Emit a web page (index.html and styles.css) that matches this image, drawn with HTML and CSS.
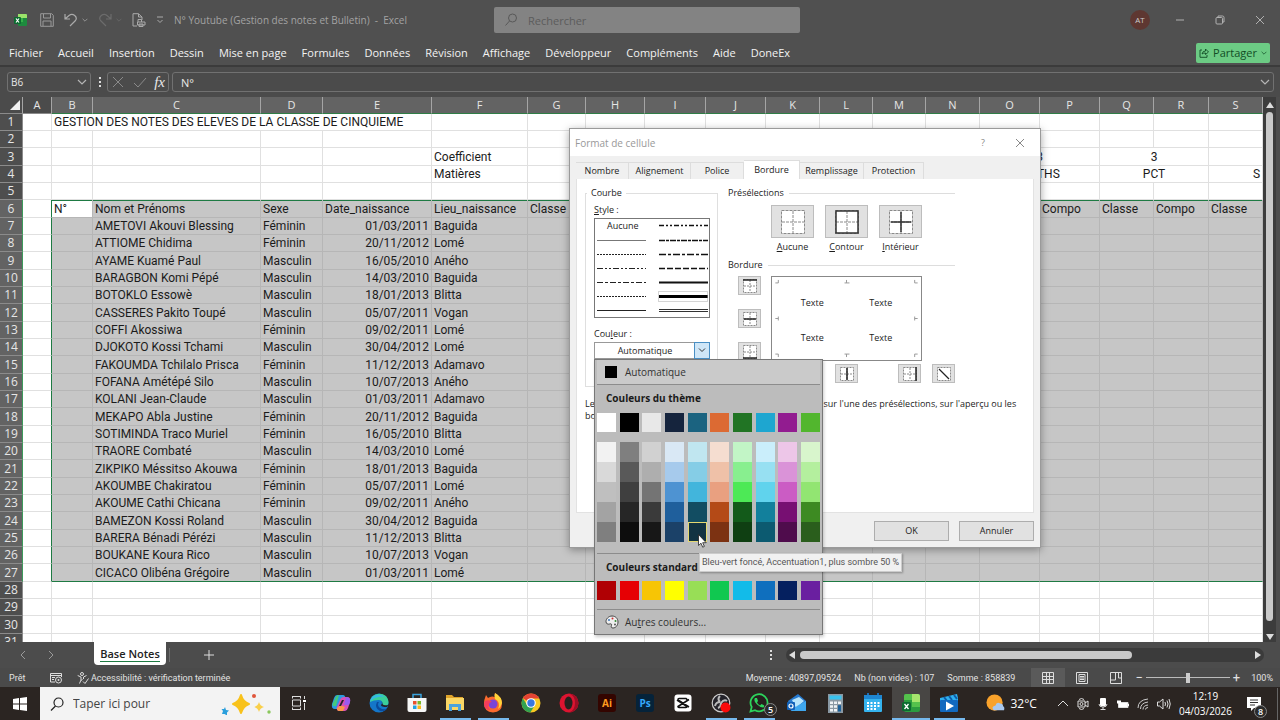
FILE: index.html
```html
<!DOCTYPE html>
<html lang="fr">
<head>
<meta charset="utf-8">
<title>N° Youtube (Gestion des notes et Bulletin) - Excel</title>
<link rel="stylesheet" href="styles.css">
</head>
<body>
<svg class="defs" aria-hidden="true">
  <defs>
    <symbol id="grid4" viewBox="0 0 14 14"><rect x=".5" y=".5" width="13" height="13" fill="#fff"/><path d="M.5 .5H13.5V13.5H.5ZM7 1V13M1 7H13" fill="none" stroke="#8a8a8a" stroke-dasharray="2 1"/></symbol>
    <symbol id="grid24" viewBox="0 0 24 24"><rect x=".5" y=".5" width="23" height="23" fill="#fff"/><path d="M.5 .5H23.5V23.5H.5ZM12 1V23M1 12H23" fill="none" stroke="#8a8a8a" stroke-dasharray="3 1"/></symbol>
    <symbol id="chev" viewBox="0 0 10 10"><path d="M1 3l4 4 4-4" fill="none" stroke="currentColor" stroke-width="1.2"/></symbol>
  </defs>
</svg>

<header class="titlebar">
  <div class="quick">
    <svg class="i14" viewBox="0 0 14 14"><rect x="4" y="1" width="9" height="12" rx="1" fill="#1d8a3e"/><path d="M4 1h8q1 0 1 1v3H4z" fill="#9be36a"/><path d="M4 5h5v4H4z" fill="#36b24a"/><rect x="0" y="4" width="7" height="7" rx="1" fill="#0c6b30"/><path d="M2 5.500l3 4m0-4l-3 4" stroke="#fff" stroke-width="1.200"/></svg>
    <button class="tool save" aria-label="Enregistrer"><svg class="i14" viewBox="0 0 14 14"><path d="M.7.7h11l1.600 1.600v11H.7zM3.500 1v4h7V1M3 13V8h8v5" fill="none" stroke="currentColor"/></svg></button>
    <button class="tool" aria-label="Annuler la frappe"><svg class="i14" viewBox="0 0 14 14"><path d="M1 1v5h5M1 6l4-3.500C9-.5 14 4 11.500 7.500L6 13" fill="none" stroke="currentColor" stroke-width="1.200"/></svg><svg class="i6"><use href="#chev"/></svg></button>
    <button class="tool dim" aria-label="Rétablir"><svg class="i14" viewBox="0 0 14 14"><path d="M13 1v5H8M13 6L9 2.500C5-.5 0 4 2.500 7.500L8 13" fill="none" stroke="currentColor" stroke-width="1.200"/></svg><svg class="i6"><use href="#chev"/></svg></button>
    <button class="tool" aria-label="Aperçu"><svg class="i14" viewBox="0 0 14 14"><path d="M5 13H1V.7h5.500L10 4v3M6.500 1v3H10M6 9V6.500h3.500V9M5.500 9H13v3H5.500zM7 11h4v2.500H7z" fill="none" stroke="currentColor"/></svg></button>
    <button class="tool" aria-label="Personnaliser"><svg class="i8" viewBox="0 0 8 8"><path d="M1 1h6M1.500 4L4 6.500 6.500 4" fill="none" stroke="currentColor"/></svg></button>
    <h1>N° Youtube (Gestion des notes et Bulletin) &nbsp;-&nbsp; Excel</h1>
  </div>
  <label class="find"><svg class="i14" viewBox="0 0 14 14"><circle cx="8.500" cy="5" r="4" fill="none" stroke="currentColor"/><path d="M5.500 8L1.500 12.500" stroke="currentColor"/></svg><input type="text" placeholder="Rechercher" aria-label="Rechercher"></label>
  <div class="window">
    <span class="avatar">AT</span>
    <button class="tool" aria-label="Réduire"><svg class="i10" viewBox="0 0 10 10"><path d="M1 5h8" stroke="currentColor"/></svg></button>
    <button class="tool" aria-label="Restaurer"><svg class="i10" viewBox="0 0 10 10"><path d="M3 2.500V1h4.500q1.500 0 1.500 1.500V7H7.500" fill="none" stroke="currentColor"/><rect x="1" y="2.500" width="6.500" height="6.500" rx="1" fill="none" stroke="currentColor"/></svg></button>
    <button class="tool" aria-label="Fermer"><svg class="i10" viewBox="0 0 10 10"><path d="M1 1l8 8M9 1L1 9" stroke="currentColor"/></svg></button>
  </div>
</header>

<nav class="menu">
  <button>Fichier</button><button>Accueil</button><button>Insertion</button><button>Dessin</button><button>Mise en page</button><button>Formules</button><button>Données</button><button>Révision</button><button>Affichage</button><button>Développeur</button><button>Compléments</button><button>Aide</button><button>DoneEx</button>
  <button class="share"><svg class="i10" viewBox="0 0 10 10"><path d="M3 2H1v7.300h7V7M3 6Q3.500 3 6.500 3V1L9.500 4 6.500 6.500V5Q4 5 3 6z" fill="none" stroke="currentColor" stroke-width=".9"/></svg>Partager<svg class="i6"><use href="#chev"/></svg></button>
</nav>

<section class="formula">
  <div class="box name"><input type="text" value="B6" aria-label="Zone Nom"><svg class="i10"><use href="#chev"/></svg></div>
  <svg class="dots" viewBox="0 0 4 12"><path d="M1 1h2v2H1zM1 5h2v2H1zM1 9h2v2H1z" fill="#ddd"/></svg>
  <div class="box fx">
    <svg class="i14" viewBox="0 0 14 14"><path d="M2 2l10 10M12 2L2 12" stroke="#8a8a8a"/></svg>
    <svg class="i14" viewBox="0 0 14 14"><path d="M1 8l4 4 8-9" fill="none" stroke="#8a8a8a"/></svg>
    <i>fx</i>
  </div>
  <div class="box bar"><input type="text" value="N°" aria-label="Barre de formule"><svg class="i10"><use href="#chev"/></svg></div>
</section>

<main class="sheet">
<div class="cells">
<table>
<colgroup><col class="w23"><col class="w29"><col class="w41"><col class="w168"><col class="w62"><col class="w109"><col class="w96"><col class="w58"><col class="w59"><col class="w61"><col class="w60"><col class="w54"><col class="w53"><col class="w53"><col class="w54"><col class="w60"><col class="w60"><col class="w54"><col class="w55"><col></colgroup>
<thead><tr><th class="corner"><svg class="i10" viewBox="0 0 10 10"><path d="M10 0v10H0z" fill="#f2f2f2"/></svg><th class="off">A<th>B<th>C<th>D<th>E<th>F<th>G<th>H<th>I<th>J<th>K<th>L<th>M<th>N<th>O<th>P<th>Q<th>R<th>S</tr></thead>
<tbody>
<tr><th>1<td><td colspan="4">GESTION DES NOTES DES ELEVES DE LA CLASSE DE CINQUIEME<td> <td><td><td><td><td><td><td><td><td><td><td><td><td></tr>
<tr><th>2<td><td><td><td><td><td> <td><td><td><td><td><td><td><td><td><td><td><td><td></tr>
<tr><th>3<td><td><td><td><td><td>Coefficient<td><td><td><td><td><td><td><td><td class="mid" colspan="2">3<td class="mid" colspan="2">3<td></tr>
<tr><th>4<td><td><td><td><td><td>Matières<td><td><td><td><td><td><td><td><td class="mid" colspan="2">MATHS<td class="mid" colspan="2">PCT<td class="num">S</tr>
<tr><th>5<td><td><td><td><td><td> <td><td><td><td><td><td><td><td><td><td><td><td><td></tr>
<tr class="sel first"><th>6<td><td class="cur">N°<td>Nom et Prénoms<td>Sexe<td>Date_naissance<td>Lieu_naissance<td>Classe<td><td><td><td><td><td><td><td>Classe<td>Compo<td>Classe<td>Compo<td>Classe</tr>
<tr class="sel"><th>7<td><td><td>AMETOVI Akouvi Blessing<td>Féminin<td class="num">01/03/2011<td>Baguida<td><td><td><td><td><td><td><td><td><td><td><td><td></tr>
<tr class="sel"><th>8<td><td><td>ATTIOME Chidima<td>Féminin<td class="num">20/11/2012<td>Lomé<td><td><td><td><td><td><td><td><td><td><td><td><td></tr>
<tr class="sel"><th>9<td><td><td>AYAME Kuamé Paul<td>Masculin<td class="num">16/05/2010<td>Aného<td><td><td><td><td><td><td><td><td><td><td><td><td></tr>
<tr class="sel"><th>10<td><td><td>BARAGBON Komi Pépé<td>Masculin<td class="num">14/03/2010<td>Baguida<td><td><td><td><td><td><td><td><td><td><td><td><td></tr>
<tr class="sel"><th>11<td><td><td>BOTOKLO Essowè<td>Masculin<td class="num">18/01/2013<td>Blitta<td><td><td><td><td><td><td><td><td><td><td><td><td></tr>
<tr class="sel"><th>12<td><td><td>CASSERES Pakito Toupé<td>Masculin<td class="num">05/07/2011<td>Vogan<td><td><td><td><td><td><td><td><td><td><td><td><td></tr>
<tr class="sel"><th>13<td><td><td>COFFI Akossiwa<td>Féminin<td class="num">09/02/2011<td>Lomé<td><td><td><td><td><td><td><td><td><td><td><td><td></tr>
<tr class="sel"><th>14<td><td><td>DJOKOTO Kossi Tchami<td>Masculin<td class="num">30/04/2012<td>Lomé<td><td><td><td><td><td><td><td><td><td><td><td><td></tr>
<tr class="sel"><th>15<td><td><td>FAKOUMDA Tchilalo Prisca<td>Féminin<td class="num">11/12/2013<td>Adamavo<td><td><td><td><td><td><td><td><td><td><td><td><td></tr>
<tr class="sel"><th>16<td><td><td>FOFANA Amétépé Silo<td>Masculin<td class="num">10/07/2013<td>Aného<td><td><td><td><td><td><td><td><td><td><td><td><td></tr>
<tr class="sel"><th>17<td><td><td>KOLANI Jean-Claude<td>Masculin<td class="num">01/03/2011<td>Adamavo<td><td><td><td><td><td><td><td><td><td><td><td><td></tr>
<tr class="sel"><th>18<td><td><td>MEKAPO Abla Justine<td>Féminin<td class="num">20/11/2012<td>Baguida<td><td><td><td><td><td><td><td><td><td><td><td><td></tr>
<tr class="sel"><th>19<td><td><td>SOTIMINDA Traco Muriel<td>Féminin<td class="num">16/05/2010<td>Blitta<td><td><td><td><td><td><td><td><td><td><td><td><td></tr>
<tr class="sel"><th>20<td><td><td>TRAORE Combaté<td>Masculin<td class="num">14/03/2010<td>Lomé<td><td><td><td><td><td><td><td><td><td><td><td><td></tr>
<tr class="sel"><th>21<td><td><td>ZIKPIKO Méssitso Akouwa<td>Féminin<td class="num">18/01/2013<td>Baguida<td><td><td><td><td><td><td><td><td><td><td><td><td></tr>
<tr class="sel"><th>22<td><td><td>AKOUMBE Chakiratou<td>Féminin<td class="num">05/07/2011<td>Lomé<td><td><td><td><td><td><td><td><td><td><td><td><td></tr>
<tr class="sel"><th>23<td><td><td>AKOUME Cathi Chicana<td>Féminin<td class="num">09/02/2011<td>Aného<td><td><td><td><td><td><td><td><td><td><td><td><td></tr>
<tr class="sel"><th>24<td><td><td>BAMEZON Kossi Roland<td>Masculin<td class="num">30/04/2012<td>Baguida<td><td><td><td><td><td><td><td><td><td><td><td><td></tr>
<tr class="sel"><th>25<td><td><td>BARERA Bénadi Pérézi<td>Masculin<td class="num">11/12/2013<td>Blitta<td><td><td><td><td><td><td><td><td><td><td><td><td></tr>
<tr class="sel"><th>26<td><td><td>BOUKANE Koura Rico<td>Masculin<td class="num">10/07/2013<td>Vogan<td><td><td><td><td><td><td><td><td><td><td><td><td></tr>
<tr class="sel last"><th>27<td><td><td>CICACO Olibéna Grégoire<td>Masculin<td class="num">01/03/2011<td>Lomé<td><td><td><td><td><td><td><td><td><td><td><td><td></tr>
<tr><th>28<td><td><td><td><td><td> <td><td><td><td><td><td><td><td><td><td><td><td><td></tr>
<tr><th>29<td><td><td><td><td><td> <td><td><td><td><td><td><td><td><td><td><td><td><td></tr>
<tr><th>30<td><td><td><td><td><td> <td><td><td><td><td><td><td><td><td><td><td><td><td></tr>
<tr><th>31<td><td><td><td><td><td> <td><td><td><td><td><td><td><td><td><td><td><td><td></tr>
</tbody>
</table>
</div>
<div class="vscroll"><svg class="i8" viewBox="0 0 8 8"><path d="M4 1l4 6H0z" fill="#ddd"/></svg><span></span><svg class="i8" viewBox="0 0 8 8"><path d="M4 7l4-6H0z" fill="#ddd"/></svg></div>
</main>

<section class="tabs">
  <button class="arrow" aria-label="Feuille précédente"><svg class="i10" viewBox="0 0 10 10"><path d="M7 1L3 5l4 4" fill="none" stroke="currentColor"/></svg></button>
  <button class="arrow" aria-label="Feuille suivante"><svg class="i10" viewBox="0 0 10 10"><path d="M3 1l4 4-4 4" fill="none" stroke="currentColor"/></svg></button>
  <button class="sheetname"><span>Base Notes</span></button>
  <span class="split"></span>
  <button class="plus" aria-label="Nouvelle feuille"><svg class="i10" viewBox="0 0 10 10"><path d="M5 0v10M0 5h10" stroke="#ddd"/></svg></button>
  <svg class="dots" viewBox="0 0 4 12"><path d="M1 1h2v2H1zM1 5h2v2H1zM1 9h2v2H1z" fill="#ddd"/></svg>
  <div class="hscroll"><svg class="i8" viewBox="0 0 8 8"><path d="M1 4l6-4v8z" fill="#ddd"/></svg><span></span><svg class="i8" viewBox="0 0 8 8"><path d="M7 4L1 0v8z" fill="#ddd"/></svg></div>
</section>

<footer class="status">
  <span class="ready">Prêt</span>
  <svg class="i12" viewBox="0 0 12 12"><path d="M5 10H.5V1.500h11V5M.5 3.500h11M2 5.500h3M2 7.500h2" fill="none" stroke="#ddd"/><circle cx="8.500" cy="8" r="3" fill="none" stroke="#ddd"/><circle cx="8.500" cy="8" r="1" fill="#ddd"/></svg>
  <span class="access"><svg class="i12" viewBox="0 0 12 12"><circle cx="5" cy="2" r="1.500" fill="none" stroke="#ddd"/><path d="M.7 3.500L4 5v3l-1.500 3.500M9.500 3.500L6.500 5v2M4 8.500l1.500-1M6 9.500L8 11.500l3.500-5" fill="none" stroke="#ddd"/></svg>Accessibilité : vérification terminée</span>
  <div class="stats"><span>Moyenne : 40897,09524</span><span>Nb (non vides) : 107</span><span>Somme : 858839</span></div>
  <div class="views">
    <button class="on" aria-label="Normal"><svg class="i12" viewBox="0 0 12 12"><path d="M.5.5h11v11H.5zM4.500 1v10M7.500 1v10M1 4.500h10M1 7.500h10" fill="none" stroke="#ddd"/></svg></button>
    <button aria-label="Mise en page"><svg class="i12" viewBox="0 0 12 12"><path d="M.5.5h11v11H.5zM3 2.500h6v7H3zM4 4.500h4M4 6h4M4 7.500h4" fill="none" stroke="#ddd"/></svg></button>
    <button aria-label="Sauts de page"><svg class="i12" viewBox="0 0 12 12"><path d="M.5.5h11v11H.5zM.5 8h5V.5M8.500.5V6h3" fill="none" stroke="#ddd"/></svg></button>
  </div>
  <div class="zoom"><span>−</span><input type="range" min="0" max="200" value="100" aria-label="Zoom"><span>+</span></div>
  <span class="pct">100%</span>
</footer>

<nav class="taskbar">
  <button class="start" aria-label="Démarrer"><svg class="i14" viewBox="0 0 14 14"><path d="M0 2l6-1v5.600H0zM7 .9L14 0v6.600H7zM0 7.400h6V13l-6-1zM7 7.400h7V14l-7-1z" fill="#fff"/></svg></button>
  <label class="wsearch"><svg class="i14" viewBox="0 0 14 14"><circle cx="8.500" cy="5.500" r="4.500" fill="none" stroke="#222" stroke-width="1.200"/><path d="M5.500 9L1 13.500" stroke="#222" stroke-width="1.200"/></svg><input type="text" placeholder="Taper ici pour" aria-label="Taper ici pour rechercher">
    <svg class="stars" viewBox="0 0 50 22"><path d="M20 2q2 7 8 9-6 2-8 9-2-7-8-9 6-2 8-9z" fill="#f8c21c" stroke="#f8c21c" stroke-width="2" stroke-linejoin="round"/><path d="M38 9q1 4 5 5-4 1-5 5-1-4-5-5 4-1 5-5z" fill="#f9cf4a"/><path d="M4 14l1 3 3 .5-2 2 0 3-2.500-1.500L1 21l1-3-1.500-2 2.500 0z" fill="#2b9fdc"/><circle cx="33" cy="3" r="2" fill="#e0563b"/><circle cx="48" cy="19" r="1.700" fill="#8ac75c"/></svg></label>
  <div class="apps">
    <button class="tv" aria-label="Vue des tâches"><svg class="i14" viewBox="0 0 14 14"><path d="M0 .5h9M.5 4h8v6h-8zM0 13.500h9M.5 0v2.500M8.500 0v2.500M.5 11.500V14M8.500 11.500V14M12.500 0v3M12.500 7v7" fill="none" stroke="#ddd"/><rect x="11" y="4" width="3" height="2" fill="#fff"/></svg></button>
    <button aria-label="Copilot"><svg viewBox="0 0 20 20"><path d="M6 2h6q2 0 2.500 3L11 13q-1 3-4 3H4Q0 16 1 11L3 5q1-3 3-3z" fill="#2a9be0"/><path d="M4 6q1-4 4-4L5 13H2q-1-2 0-3z" fill="#45c97b"/><path d="M14 18H8q-2 0-2.500-3L9 7q1-3 4-3h3q4 0 3 5l-2 6q-1 3-3 3z" fill="#d850b5"/><path d="M16 4q4 1 3 5l-1 3h-5l2-8z" fill="#9a5af0"/><path d="M6 15q2-1 3-3l5 2-2 4H8q-2 0-2-3z" fill="#fb9548"/><path d="M11 7l-3 6h2l3-6z" fill="#25232a"/></svg></button>
    <button aria-label="Edge"><svg viewBox="0 0 20 20"><circle cx="10" cy="10" r="9.500" fill="#1476c9"/><path d="M1 9C2-2 19-2 19.500 9q0 5-6 4 1-6-4-6-5 0-8.500 2z" fill="#3bcf9a"/><path d="M1 9C2 1 12 0 15 4 8 3 3 6 1 9z" fill="#35b8e6"/><path d="M8 9q-3 6 3 9 4 1 7-2-8 1-9-4 0-2 1-3z" fill="#0b4b9c"/><path d="M12 8q2 2 0 4 0 2 6 2l1.500-2q-5 1-6-1 0-2-1.500-3z" fill="#25232a"/></svg></button>
    <button aria-label="Microsoft Store"><svg viewBox="0 0 20 20"><path d="M6 5V1.500h8V5" fill="none" stroke="#3aa4de" stroke-width="1.500"/><path d="M.5 5h19v12q0 2-2 2h-15q-2 0-2-2z" fill="#f6f6f6"/><path d="M6 8h3.500v3.500H6z" fill="#e9512d"/><path d="M10.500 8H14v3.500h-3.500z" fill="#79b829"/><path d="M6 12.500h3.500V16H6z" fill="#20a1e2"/><path d="M10.500 12.500H14V16h-3.500z" fill="#fbb81a"/></svg></button>
    <button class="run" aria-label="Explorateur"><svg viewBox="0 0 20 20"><path d="M1 2h6l2 2h9v3H1z" fill="#e0a42b"/><path d="M1 5h18v12H1z" fill="#fad766"/><path d="M4 18v-7h12v7h-3v-4H7v4z" fill="#4ba3dd"/></svg></button>
    <button class="run" aria-label="Firefox"><svg viewBox="0 0 20 20"><path d="M2 5l1-3 2 3 2-1q2-1 5 0Q11 2 12 0q7 4 7 11 0 8-9 8.500Q1 19 1 10q0-3 1-5z" fill="#fb6a2e"/><path d="M12 0q7 4 7 10-1 4-4 6 3-7-3-10-1-3 0-6z" fill="#ffd43a"/><circle cx="10" cy="11" r="4.500" fill="#7a45d8"/><path d="M2 8q4-2 7 1-3 0-3 3-2 3 2 5-7 0-7-6z" fill="#f43c5c"/></svg></button>
    <button aria-label="Chrome"><svg viewBox="0 0 20 20"><circle cx="10" cy="10" r="9.500" fill="#f8c922"/><path d="M10 10L1.800 5.200A9.500 9.500 0 0 1 18.300 5.500H10z" fill="#e44334"/><path d="M1.800 5.200A9.500 9.500 0 0 0 9.300 19.500L14 12l-4 2-4-2z" fill="#32a251"/><circle cx="10" cy="10" r="4.800" fill="#fff"/><circle cx="10" cy="10" r="3.700" fill="#3977e0"/></svg></button>
    <button aria-label="Opera"><svg viewBox="0 0 20 20"><circle cx="10" cy="10" r="9.500" fill="#dc1430"/><path d="M10 .5a9.500 9.500 0 0 1 0 19q6-2 6-9.500T10 .5z" fill="#9d0e25"/><ellipse cx="9.500" cy="10" rx="4" ry="6.500" fill="#26211f"/></svg></button>
    <button aria-label="Illustrator"><span class="adobe ai">Ai</span></button>
    <button aria-label="Photoshop"><span class="adobe ps">Ps</span></button>
    <button aria-label="CapCut"><svg viewBox="0 0 20 20"><rect x="1.500" y="1.500" width="17" height="17" rx="3" fill="#fff"/><path d="M16 6.500L5 13.500q0 1 1 1h7q1 0 1-1L4 7M14 7q0-1-1-1.500H6Q5 5.500 5 7l11 7" fill="none" stroke="#111" stroke-width="1.600"/></svg></button>
    <button class="run" aria-label="OBS"><svg viewBox="0 0 20 20"><circle cx="10" cy="10" r="8.800" fill="#24232a" stroke="#ccc" stroke-width="1.200"/><path d="M9 3q-3 3 0 6M4 13q1-4 5-4M16 8q-3-2-6 2 0 4-3 5" fill="none" stroke="#bbb" stroke-width="2"/><circle cx="14.500" cy="14.500" r="5" fill="#fb0a0a"/></svg></button>
    <button class="run" aria-label="WhatsApp"><svg viewBox="0 0 20 20"><path d="M1.500 18.500l1.200-4.500a8.500 8.500 0 1 1 3.300 3.200z" fill="#26211f" stroke="#2dd35c" stroke-width="1.800"/><path d="M6 5q-2 3 2 6.500t6.500 3q1.500-2 0-2.500l-2-1-1.500 1.500q-2-1-3-3L9 8 8 5z" fill="#2dd35c"/></svg><span class="badge">5</span></button>
    <button aria-label="Courrier"><svg viewBox="0 0 20 20"><path d="M1 8L11 1l8 7v10H4z" fill="#2679cf"/><path d="M5 7l7-3 5 4-8 7z" fill="#b7e4fb"/><path d="M19 8v10H4l6-5z" fill="#3fa7ee"/><rect x="0" y="9" width="8" height="8" rx="1" fill="#1160b7"/><circle cx="4" cy="13" r="2" fill="none" stroke="#fff" stroke-width="1.200"/></svg></button>
    <button aria-label="Calculatrice"><svg viewBox="0 0 20 20"><rect x="3" y="1" width="15" height="19" fill="#8a98a3"/><rect x="4.500" y="2.500" width="12" height="4" fill="#38c2ee"/><path d="M5 8.500h3v2.500H5zM9 8.500h3v2.500H9zM13 8.500h3v2.500h-3zM5 12.200h3v2.500H5zM9 12.200h3v2.500H9zM5 16h3v2.500H5zM9 16h3v2.500H9z" fill="#eef2f5"/><path d="M13 12.200h3v6.300h-3z" fill="#1b5f98"/></svg></button>
    <button aria-label="Calendrier"><svg viewBox="0 0 20 20"><path d="M5 0v4M15 0v4" stroke="#1e6fb5" stroke-width="2"/><rect x="1" y="2" width="18" height="17" rx="1" fill="#35b3ee"/><path d="M1 2h18v4H1z" fill="#1f86d1"/><path d="M4 9h2v2H4zM7.500 9h2v2h-2zM11 9h2v2h-2zM14.500 9h2v2h-2zM4 12h2v2H4zM7.500 12h2v2h-2zM11 12h2v2h-2zM14.500 12h2v2h-2zM4 15h2v2H4zM7.500 15h2v2h-2zM11 15h2v2h-2z" fill="#fff"/></svg></button>
    <button class="run active" aria-label="Excel"><svg viewBox="0 0 20 20"><rect x="3" y="1" width="16" height="18" rx="2" fill="#2b9c3f"/><path d="M11 1h6q2 0 2 2v6h-8z" fill="#a6e66d"/><path d="M3 7h8V1H5Q3 1 3 3zM11 9h8v5h-8z" fill="#54c24c"/><rect x="1" y="9" width="9" height="9" rx="1.500" fill="#0c6b30"/><path d="M3.500 11l4 5m0-5l-4 5" stroke="#fff" stroke-width="1.300"/></svg></button>
    <button class="run" aria-label="Films et TV"><svg viewBox="0 0 20 20"><path d="M1 5L18 1l1 4v4H1z" fill="#2fb0ef"/><path d="M5 4l3 4M10 3l3 4M15 2l3 4" stroke="#0c5ba8" stroke-width="2"/><rect x="1" y="7" width="18" height="12" rx="1" fill="#1269bf"/><path d="M7 8.500l8 4.500-8 4.500z" fill="#fff"/></svg></button>
  </div>
  <div class="tray">
    <button class="weather"><svg viewBox="0 0 20 20"><circle cx="9" cy="9" r="8.500" fill="#f9a22b"/><path d="M8 17q-3-4 2-5 1-4 5-2 3 0 3 3 2 1 1 4z" fill="#a9c8ee"/></svg>32°C</button>
    <svg class="i12" viewBox="0 0 12 12"><path d="M1 8l5-5 5 5" fill="none" stroke="#ddd"/></svg>
    <svg class="i12" viewBox="0 0 12 12"><path d="M1 3h7v6H1zM8 5l3-2v6L8 7M2 1.500Q4.500-.5 7 1.500M2 10.500q2.500 2 5 0" fill="none" stroke="#ddd"/><circle cx="4.500" cy="6" r="1.500" fill="none" stroke="#ddd"/></svg>
    <svg class="i12" viewBox="0 0 12 12"><rect x="3" y="0" width="6" height="8" rx="1" fill="#fff"/><path d="M2 6q0 3 4 3t4-3M6 9v3M3.500 11.500h5" fill="none" stroke="#ddd"/></svg>
    <svg class="i12" viewBox="0 0 12 12"><path d="M1.500 4.500h9.500v5H1.500z" fill="#fff" stroke="#ddd"/><path d="M0 2.500h4v3H0z" fill="#fff"/><path d="M11.500 6v2" stroke="#fff"/></svg>
    <svg class="i12" viewBox="0 0 12 12"><path d="M1 10Q1 2 11 1M3.500 11q0-6 7.500-7M6 11.500q0-4 5-4.500M8.500 11.500q0-2 2.500-2" fill="none" stroke="#ccc"/></svg>
    <svg class="i14" viewBox="0 0 14 14"><path d="M.5 5h2L6 2v10L2.500 9h-2zM8 5q1 2 0 4M10 3.500q2 3.500 0 7M12 2q2.500 5 0 10" fill="none" stroke="#ddd"/></svg>
    <time>12:19<br>04/03/2026</time>
    <button class="notif" aria-label="Notifications"><svg class="i14" viewBox="0 0 14 14"><path d="M0 0h14v11H7l-3 3v-3H0z" fill="#fff"/><path d="M3 3h8M3 5.500h8M3 8h5" stroke="#333"/></svg><span class="badge">8</span></button>
  </div>
</nav>

<div class="dialog" role="dialog" aria-labelledby="dlg">
  <div class="dtitle"><h2 id="dlg">Format de cellule</h2><button aria-label="Aide">?</button><button aria-label="Fermer"><svg class="i10" viewBox="0 0 10 10"><path d="M1 1l8 8M9 1L1 9" stroke="currentColor"/></svg></button></div>
  <div class="dtabs"><button class="t53">Nombre</button><button class="t62">Alignement</button><button class="t53">Police</button><button class="t56 act">Bordure</button><button class="t64">Remplissage</button><button class="t60">Protection</button></div>
  <div class="panel">
    <div class="cols">
      <fieldset class="line">
        <legend>Courbe</legend>
        <span class="lab"><u>S</u>tyle :</span>
        <div class="styles">
          <span>Aucune</span>
          <svg viewBox="0 0 114 98"><g stroke="#222" fill="none"><path d="M2 21.500h49" stroke="#777"/><path d="M2 35.500h49" stroke-dasharray="2 1"/><path d="M2 49.500h49" stroke-dasharray="6 2 2 2 2 2"/><path d="M2 63.500h49" stroke-dasharray="6 2 3 2"/><path d="M2 77.500h49" stroke-dasharray="2 1"/><path d="M2 91.500h49"/></g><g stroke="#111" stroke-width="1.500" fill="none"><path d="M64 6.500h49" stroke-dasharray="5 2 2 2 2 2"/><path d="M64 21.500h49" stroke-dasharray="6 1 3 1"/><path d="M64 35.500h49" stroke-dasharray="7 2 3 2"/><path d="M64 49.500h49" stroke-dasharray="6 2"/><path d="M64 63.500h49" stroke-width="2"/><path d="M64 77.500h49" stroke-width="3" stroke="#000"/><path d="M64 90.500h49M64 92.500h49" stroke-width="1" stroke="#333"/></g><rect x="63.500" y="72.500" width="49" height="10" fill="none" stroke="#aaa" stroke-dasharray="1 1"/></svg>
        </div>
        <span class="lab couleur">Cou<u>l</u>eur :</span>
        <button class="combo"><span>Automatique</span><svg class="i14" viewBox="0 0 14 14"><path d="M4 5l3 3 3-3" fill="none" stroke="#333"/></svg></button>
      </fieldset>
      <div class="right">
        <div class="rule">Présélections</div>
        <div class="presets">
          <button><span class="face"><svg class="i24" viewBox="0 0 24 24"><use href="#grid24"/></svg></span><span><u>A</u>ucune</span></button>
          <button><span class="face"><svg class="i24" viewBox="0 0 24 24"><use href="#grid24"/><path d="M1 1h22v22H1z" fill="none" stroke="#333" stroke-width="1.500"/></svg></span><span><u>C</u>ontour</span></button>
          <button><span class="face"><svg class="i24" viewBox="0 0 24 24"><use href="#grid24"/><path d="M12 2v20M2 12h20" stroke="#333" stroke-width="1.500"/></svg></span><span><u>I</u>ntérieur</span></button>
        </div>
        <div class="rule">Bordure</div>
        <div class="edit">
          <div class="side">
            <button class="face sm" aria-label="Haut"><svg class="i14" viewBox="0 0 14 14"><use href="#grid4"/><path d="M0 1h14" stroke="#222" stroke-width="1.500"/></svg></button>
            <button class="face sm" aria-label="Milieu"><svg class="i14" viewBox="0 0 14 14"><use href="#grid4"/><path d="M1 7h12" stroke="#222" stroke-width="1.500"/></svg></button>
            <button class="face sm" aria-label="Bas"><svg class="i14" viewBox="0 0 14 14"><use href="#grid4"/><path d="M0 13h14" stroke="#222" stroke-width="1.500"/></svg></button>
          </div>
          <div class="preview">
            <svg viewBox="0 0 150 84"><path d="M3 6h3V3M147 6h-3V3M3 78h3v3M147 78h-3v3M75 3v3M73 6h5M75 81v-3M73 78h5M3 42h3M6 40v4M147 42h-3M144 40v4" fill="none" stroke="#999"/></svg>
            <span>Texte</span><span>Texte</span><span>Texte</span><span>Texte</span>
          </div>
        </div>
        <div class="under">
          <button class="face sm" aria-label="Diagonale montante"><svg class="i14" viewBox="0 0 14 14"><use href="#grid4"/><path d="M2 12L12 2" stroke="#222"/></svg></button>
          <button class="face sm" aria-label="Gauche"><svg class="i14" viewBox="0 0 14 14"><use href="#grid4"/><path d="M1 0v14" stroke="#222" stroke-width="1.500"/></svg></button>
          <button class="face sm" aria-label="Centre"><svg class="i14" viewBox="0 0 14 14"><use href="#grid4"/><path d="M7 1v12" stroke="#222" stroke-width="1.500"/></svg></button>
          <button class="face sm" aria-label="Droite"><svg class="i14" viewBox="0 0 14 14"><use href="#grid4"/><path d="M13 0v14" stroke="#222" stroke-width="1.500"/></svg></button>
          <button class="face sm" aria-label="Diagonale"><svg class="i14" viewBox="0 0 14 14"><rect x=".5" y=".5" width="13" height="13" fill="#fff" stroke="#8a8a8a" stroke-dasharray="2 1"/><path d="M2 2l10 10" stroke="#222" stroke-width="1.300"/></svg></button>
        </div>
      </div>
    </div>
    <p>Le style de bordure choisi peut être appliqué en cliquant sur l'une des présélections, sur l'aperçu ou les boutons ci-dessus.</p>
  </div>
  <div class="actions"><button>OK</button><button>Annuler</button></div>
</div>

<div class="palette">
  <button class="auto"><i></i>Automatique</button>
  <h3>Couleurs du thème</h3>
  <div class="swatches">
    <button style="background:#ffffff"></button><button style="background:#000000"></button><button style="background:#e8e8e8"></button><button style="background:#15243d"></button><button style="background:#1b6380"></button><button style="background:#dc6a33"></button><button style="background:#217424"></button><button style="background:#1ea6d0"></button><button style="background:#921c90"></button><button style="background:#52b62e"></button>
  </div>
  <div class="swatches tints">
    <button style="background:#f2f2f2"></button><button style="background:#7f7f7f"></button><button style="background:#d1d1d1"></button><button style="background:#d9e8f5"></button><button style="background:#c0e6f0"></button><button style="background:#f5ddd0"></button><button style="background:#c2f5c6"></button><button style="background:#caeefb"></button><button style="background:#edc6e8"></button><button style="background:#d8f5cc"></button>
    <button style="background:#d9d9d9"></button><button style="background:#595959"></button><button style="background:#aeaeae"></button><button style="background:#a6caec"></button><button style="background:#85cde6"></button><button style="background:#efc1a8"></button><button style="background:#88ef8f"></button><button style="background:#97e0f2"></button><button style="background:#da93d8"></button><button style="background:#b4ef9e"></button>
    <button style="background:#bfbfbf"></button><button style="background:#3f3f3f"></button><button style="background:#747474"></button><button style="background:#4e93d2"></button><button style="background:#42b5dc"></button><button style="background:#e9a080"></button><button style="background:#4de956"></button><button style="background:#60d3ed"></button><button style="background:#cb5cc4"></button><button style="background:#92e572"></button>
    <button style="background:#a3a3a3"></button><button style="background:#262626"></button><button style="background:#3a3a3a"></button><button style="background:#1f5f9c"></button><button style="background:#124d62"></button><button style="background:#b44a17"></button><button style="background:#135a1a"></button><button style="background:#12809c"></button><button style="background:#770f72"></button><button style="background:#3d8a22"></button>
    <button style="background:#7f7f7f"></button><button style="background:#0d0d0d"></button><button style="background:#171717"></button><button style="background:#1b4168"></button><button class="hover" style="background:#123342"></button><button style="background:#7c3212"></button><button style="background:#0f3f12"></button><button style="background:#0c5a70"></button><button style="background:#4f0c4c"></button><button style="background:#2a5e1c"></button>
  </div>
  <h3 class="std">Couleurs standard</h3>
  <div class="swatches">
    <button style="background:#b00004"></button><button style="background:#e60004"></button><button style="background:#f7c505"></button><button style="background:#ffff00"></button><button style="background:#98de56"></button><button style="background:#10c850"></button><button style="background:#12bbe9"></button><button style="background:#0f6fbe"></button><button style="background:#05205f"></button><button style="background:#6a1fa0"></button>
  </div>
  <button class="more"><svg class="i14" viewBox="0 0 14 14"><path d="M7 1c3.500 0 6 2.500 6 6s-2.500 6-5 6c-2 0-2-1-1.500-2.500S6 8.500 4.500 9 1 9 1 6.500 3.500 1 7 1z" fill="#eee" stroke="#444"/><circle cx="4" cy="5" r="1" fill="#3e77b6"/><circle cx="7.500" cy="3.500" r="1" fill="#c33"/><circle cx="10.500" cy="6" r="1" fill="#383"/><circle cx="10" cy="9.500" r="1" fill="#555"/></svg><span>Au<u>t</u>res couleurs...</span></button>
</div>
<div class="tip" role="tooltip">Bleu-vert foncé, Accentuation1, plus sombre 50 %</div>
<svg class="pointer" viewBox="0 0 9 14"><path d="M.5.5v11l2.500-2.300 1.700 4 1.700-.8-1.700-3.700h3.500z" fill="#fff" stroke="#222" stroke-width=".8"/></svg>
</body>
</html>
```
FILE: styles.css
```css
* { box-sizing: border-box; }
body { margin: 0; height: 100vh; min-width: 1100px; overflow: hidden; display: flex; flex-direction: column; position: relative; background: #4d4d4d; color: #eee; font: 11px "Open Sans", "Noto Sans", sans-serif; }
button, input { font: inherit; color: inherit; border: 0; background: none; padding: 0; margin: 0; min-width: 0; }
h1, h2, h3, p { margin: 0; font-size: inherit; font-weight: 400; }
svg { display: block; flex: none; }
.defs { position: absolute; width: 0; height: 0; }
.i6 { width: 6px; height: 6px; }
.i8 { width: 8px; height: 8px; }
.i10 { width: 10px; height: 10px; }
.i12 { width: 12px; height: 12px; }
.i14 { width: 14px; height: 14px; }
.i24 { width: 24px; height: 24px; }
.dots { width: 4px; height: 12px; }

/* Title bar */
.titlebar { flex: 0 0 40px; display: grid; grid-template-columns: 1fr 306px 1fr; align-items: center; padding-left: 14px; background: #505050; }
.quick { display: flex; align-items: center; gap: 10px; color: #aaa; min-width: 0; }
.quick h1 { font-size: 10px; white-space: nowrap; color: #a3a3a3; }
.tool { display: flex; align-items: center; gap: 4px; }
.tool.dim { color: #6c6c6c; }
.save { color: #999; margin-left: 2px; }
.find { height: 26px; display: flex; align-items: center; gap: 10px; padding-left: 10px; background: #838383; border-radius: 2px; color: #585858; }
.find input::placeholder { color: #5c5c5c; opacity: 1; }
.window { display: flex; justify-content: flex-end; align-items: center; gap: 30px; padding-right: 15px; color: #b0b0b0; }
.avatar { width: 20px; height: 20px; margin-right: -5px; border-radius: 50%; background: #5e3731; color: #ccc; font-size: 8px; line-height: 20px; text-align: center; }

/* Ribbon tabs */
.menu { flex: 0 0 27px; display: flex; align-items: center; gap: 15px; padding: 0 10px 0 9px; background: #505050; border-bottom: 2px solid #3b3b3b; color: #f3f3f3; }
.menu .share { margin-left: auto; height: 20px; display: flex; align-items: center; gap: 4px; padding: 0 3px; border-radius: 2px; background: #6ccb84; color: #124d26; }

/* Formula bar */
.formula { flex: 0 0 30px; display: flex; align-items: center; padding: 0 6px 0 7px; background: #4b4b4b; }
.box { height: 20px; display: flex; align-items: center; border: 1px solid #717171; border-radius: 3px; color: #e8e8e8; }
.box input { flex: 1; }
.name { width: 84px; padding: 0 3px; font-size: 10px; margin-right: 7px; }
.fx { width: 62px; margin: 0 3px 0 5px; padding: 0 3px; justify-content: space-between; font: italic 15px/16px "Liberation Serif", serif; }
.bar { flex: 1; padding: 0 3px 0 8px; }
.formula .i10 { color: #b5b5b5; }

/* Worksheet */
.sheet { flex: 1; min-height: 0; display: flex; }
.cells { flex: 1; overflow: hidden; background: #fff; }
table { width: 100%; table-layout: fixed; border-spacing: 0; color: #1b1b1b; font: 12px/16px Roboto, sans-serif; }
.w23 { width: 23px; } .w29 { width: 29px; } .w41 { width: 41px; } .w168 { width: 168px; } .w62 { width: 62px; }
.w109 { width: 109px; } .w96 { width: 96px; } .w58 { width: 58px; } .w59 { width: 59px; } .w61 { width: 61px; }
.w60 { width: 60px; } .w54 { width: 54px; } .w53 { width: 53px; } .w55 { width: 55px; }
td, th { height: 17px; padding: 0 2px; white-space: nowrap; font-weight: 400; line-height: 16px; }
td { border-right: 1px solid #e0e0e0; border-bottom: 1px solid #e0e0e0; }
tr:nth-child(3n) > * { height: 18px; }
th { color: #e6e6e6; background: #4e4e4e; border-bottom: 1px solid #8b8b8b; border-right: 1px solid #8b8b8b; padding: 0; font-family: "Open Sans", sans-serif; }
thead th { height: 17px; font-size: 11px; background: #636363; border-right: 1px solid #a5a5a5; border-bottom: 1px solid #2f7d46; }
thead th.off, thead th.corner { background: #4b4b4b; border-bottom-color: #8b8b8b; }
.corner svg { margin-left: 10px; }
.num { text-align: right; }
.mid { text-align: center; }
.sel th { background: #636363; border-right-color: #3c9a5b; }
.sel td { background: #c6c6c6; border-color: #b6b6b6; }
.sel td:nth-child(2) { background: #fff; border-bottom-color: #e0e0e0; border-right-color: #1e7a43; }
.sel td.cur { background: #fff; }
.first td:nth-child(n+3) { box-shadow: inset 0 1px #1e7a43; }
.last td:nth-child(n+3) { border-bottom: 1px solid #1e7a43; }
.vscroll { width: 17px; display: flex; flex-direction: column; align-items: center; gap: 3px; padding: 4px 0 1px; background: #3c3c3c; border-right: 4px solid #4d4d4d; }
.vscroll span { flex: 1; width: 7px; margin-bottom: 9px; border-radius: 4px; background: #c9c9c9; }

/* Sheet tabs */
.tabs { flex: 0 0 26px; display: flex; align-items: center; padding: 0 16px 0 18px; color: #9a9a9a; background: #4c4c4c; }
.arrow { width: 10px; margin-right: 18px; }
.sheetname { align-self: flex-start; height: 23px; width: 72px; margin-left: 20px; border-radius: 0 0 4px 4px; background: #fff; color: #222; font-weight: 600; }
.sheetname span { border-bottom: 1px solid #1e7a43; }
.split { width: 1px; height: 14px; margin: 0 34px 0 3px; background: #6d6d6d; }
.tabs .dots { margin-left: auto; margin-right: 13px; }
.hscroll { width: 38.4%; height: 14px; display: flex; align-items: center; gap: 4px; padding: 0 2px; border-radius: 7px; background: #3b3b3b; }
.hscroll span { flex: 0 0 70%; height: 8px; border-radius: 4px; background: #c9c9c9; margin-right: auto; }

/* Status bar */
.status { flex: 0 0 19px; display: flex; align-items: center; padding: 0 7px 0 9px; background: #4a4a4a; font: 9px Roboto, sans-serif; color: #e2e2e2; white-space: nowrap; }
.ready { width: 41px; }
.access { display: flex; align-items: center; gap: 2px; margin-left: 15px; }
.stats { margin-left: auto; display: flex; gap: 13px; margin-right: 16px; }
.views { display: flex; align-self: stretch; }
.views button { width: 34px; display: grid; place-items: center; }
.views .on { background: #5a5a5a; }
.zoom { display: flex; align-items: center; gap: 3px; margin: 0 11px 0 2px; font-size: 13px; }
.zoom input { width: 84px; height: 12px; appearance: none; background: linear-gradient(#bbb, #bbb) center / 100% 1px no-repeat; }
.zoom input::-webkit-slider-thumb { appearance: none; width: 4px; height: 10px; background: #ccc; }

/* Taskbar */
.taskbar { flex: 0 0 33px; display: flex; align-items: stretch; background: #2b2522; color: #fff; }
.start { width: 40px; display: grid; place-items: center; }
.wsearch { width: 240px; display: flex; align-items: center; gap: 9px; padding-left: 10px; background: #f3f3f3; color: #333; font-size: 12px; }
.wsearch input { flex: 1; }
.wsearch input::placeholder { color: #444; opacity: 1; }
.stars { width: 50px; height: 22px; margin-right: 9px; }
.apps { display: flex; }
.apps button { position: relative; width: 38px; display: grid; place-items: center; border-bottom: 2px solid transparent; }
.apps svg { width: 20px; height: 20px; }
.apps .tv { margin-right: 4px; }
.apps .tv svg { width: 14px; height: 14px; }
.apps .run { background: linear-gradient(#76b9ed, #76b9ed) bottom / 31px 2px no-repeat border-box; }
.apps .active { background: linear-gradient(#76b9ed, #76b9ed) bottom / 100% 2px no-repeat border-box, #484644; }
.adobe { width: 18px; height: 18px; border-radius: 3px; font: bold 10px/18px "Open Sans", sans-serif; }
.ai { background: #330500; color: #ff9a1e; }
.ps { background: #05233a; color: #35a8fa; }
.badge { position: absolute; right: 1px; bottom: 2px; width: 13px; height: 13px; border: 1px solid #888; border-radius: 50%; background: #2b2b2b; font-size: 9px; font-weight: 600; line-height: 11px; text-align: center; }
.tray { margin-left: auto; display: flex; align-items: center; gap: 8px; padding-right: 2px; }
.weather { display: flex; align-items: center; gap: 6px; font-size: 12px; margin-right: 12px; }
.weather svg { width: 19px; height: 19px; }
.tray time { font-size: 10px; line-height: 15px; text-align: center; }
.notif { position: relative; width: 38px; height: 32px; padding: 9px 7px; border-right: 1px solid #666; }
.notif .badge { right: 10px; }

/* Format de cellule */
.dialog { position: absolute; left: 569px; top: 128px; width: 472px; height: 420px; display: flex; flex-direction: column; padding: 0 6px 6px; background: #f0f0f0; border: 1px solid #9a9a9a; box-shadow: 0 2px 8px rgba(0, 0, 0, .35); color: #1c1c1c; font-size: 9px; line-height: 12px; }
.dtitle { height: 27px; margin: 0 -6px 4px; padding: 0 15px 0 5px; display: flex; align-items: center; gap: 30px; background: #fff; color: #888; }
.dtitle h2 { flex: 1; font-size: 10px; color: #999; }
.dtabs { display: flex; align-items: flex-end; height: 19px; }
.dtabs button { height: 17px; border: 1px solid #ddd; border-bottom: 0; border-left-width: 0; text-align: center; }
.dtabs .act { height: 19px; background: #fff; }
.t53 { width: 53px; } .t62 { width: 62px; } .t56 { width: 56px; } .t64 { width: 64px; } .t60 { width: 60px; }
.panel { flex: 1; background: #fff; border: 1px solid #e2e2e2; border-top: 0; padding: 8px 8px 0; }
.cols { display: flex; gap: 10px; }
.line { width: 133px; height: 200px; margin: 0; padding: 5px 7px 0 8px; border: 1px solid #dfdfdf; }
legend { margin-left: -7px; padding: 0 4px; }
.lab { display: block; }
.styles { position: relative; width: 116px; height: 100px; margin-top: 2px; border: 1px solid #777; }
.styles span { position: absolute; left: 12px; top: 1px; }
.couleur { margin-top: 10px; }
.combo { display: flex; align-items: center; width: 116px; height: 17px; margin-top: 2px; border: 1px solid #999; }
.combo span { flex: 1; }
.combo svg { height: 15px; background: #cfe6f7; outline: 1px solid #4a8fc4; }
.right { width: 227px; }
.rule { display: flex; align-items: center; gap: 5px; }
.rule::after { content: ""; flex: 1; height: 1px; background: #ddd; }
.presets { display: flex; gap: 11px; margin: 6px 0 6px 43px; }
.presets button { width: 43px; display: flex; flex-direction: column; align-items: center; gap: 3px; white-space: nowrap; }
.face { width: 43px; height: 33px; display: grid; place-items: center; background: #e1e1e1; border: 1px solid #bdbdbd; }
.sm { width: 23px; height: 19px; }
.edit { display: flex; gap: 10px; margin: 5px 0 3px 10px; }
.side { display: flex; flex-direction: column; justify-content: space-between; }
.preview { position: relative; width: 151px; height: 85px; display: grid; grid-template-columns: 1fr 1fr; place-items: center; padding: 8px 6px 4px; border: 1px solid #888; }
.preview svg { position: absolute; inset: 0; width: 149px; height: 83px; }
.under { display: flex; padding-left: 10px; }
.under button:nth-child(2) { margin-left: 11px; }
.under button:nth-child(3) { margin-left: 40px; }
.under button:nth-child(4) { margin-left: 40px; }
.under button:nth-child(5) { margin-left: 11px; }
.panel p { margin-top: 11px; }
.actions { display: flex; justify-content: flex-end; gap: 10px; padding-top: 8px; }
.actions button { width: 75px; height: 20px; background: #e1e1e1; border: 1px solid #adadad; }

/* Colour menu */
.palette { position: absolute; left: 594px; top: 359px; width: 229px; padding: 0 2px; background: #bcbcbc; border: 1px solid #777; color: #333; font-size: 10px; box-shadow: 1px 2px 3px rgba(0, 0, 0, .2); }
.auto, .more { width: 100%; display: flex; align-items: center; text-align: left; }
.auto { height: 25px; gap: 8px; padding-left: 8px; border-bottom: 1px solid #8c8c8c; background: #cacaca; }
.auto i { width: 12px; height: 12px; background: #000; }
.palette h3 { padding: 6px 9px 0; height: 28px; line-height: 14px; font-weight: 700; color: #1a1a1a; }
.swatches { display: grid; grid-template-columns: repeat(10, 19px); grid-auto-rows: 19px; justify-content: space-between; }
.tints { grid-auto-rows: 20px; margin: 10px 0 11px; }
.palette .std { border-top: 1px solid #8c8c8c; }
.hover { border: 1px solid #e5d870; }
.more { height: 25px; gap: 6px; margin-top: 9px; padding-left: 8px; border-top: 1px solid #8c8c8c; }
.tip { position: absolute; left: 699px; top: 553px; padding: 1px 2px; background: #f1f1f1; border: 1px solid #ccc; box-shadow: 1px 1px 2px rgba(0, 0, 0, .3); color: #555; font: 9px/15px Roboto, sans-serif; }
.pointer { position: absolute; left: 698px; top: 534px; width: 9px; height: 14px; }
```
